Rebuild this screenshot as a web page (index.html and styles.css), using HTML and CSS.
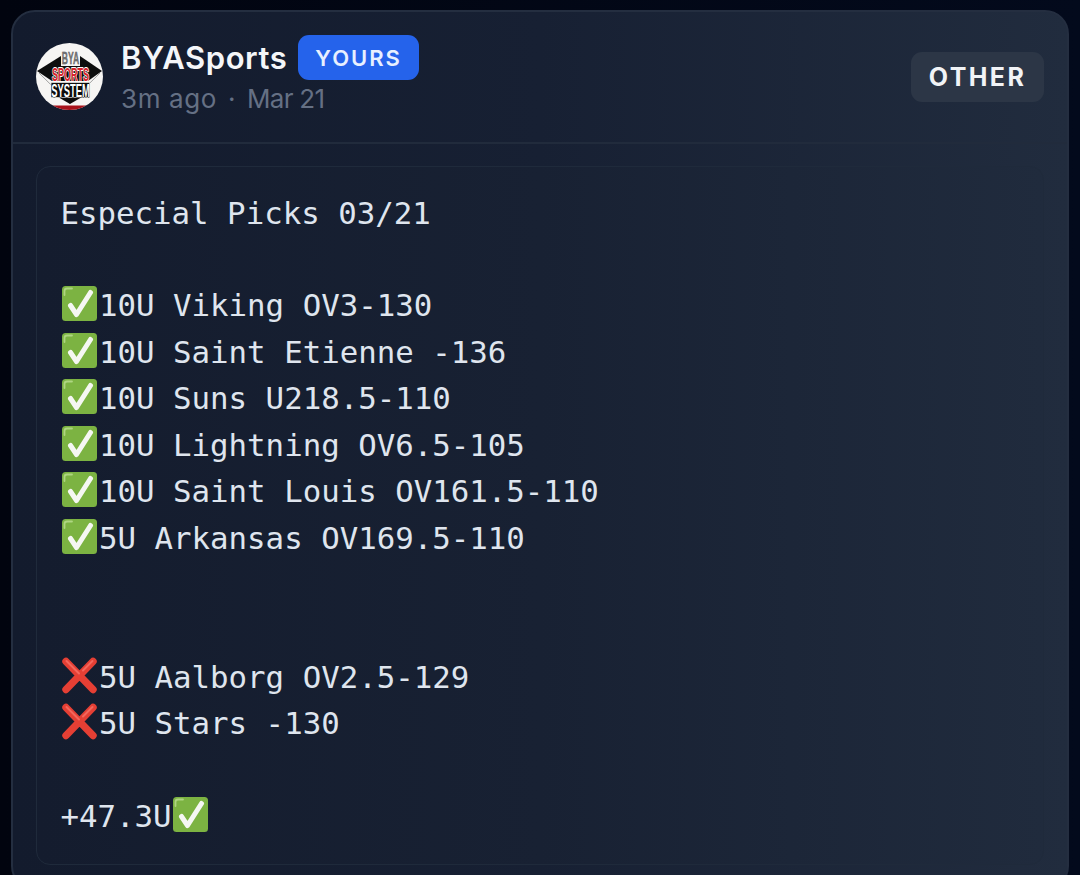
FILE: index.html
```html
<!DOCTYPE html>
<html lang="en">
<head>
<meta charset="utf-8">
<title>BYASports</title>
<link rel="stylesheet" href="styles.css">
</head>
<body>
<svg class="defs" width="0" height="0" aria-hidden="true">
  <symbol id="check" viewBox="0 0 37 37">
    <rect x="1" y="1" width="35" height="35" rx="3.5" fill="#7cb342"/>
    <path d="M3.5 10V6Q3.5 3.5 6 3.5H11" fill="none" stroke="#aed581" stroke-width="1.8" stroke-linecap="round"/>
    <path d="M9.5 20.5L15.5 29.5L29.5 7.5" fill="none" stroke="#f5f7f2" stroke-width="5" stroke-linecap="round" stroke-linejoin="round"/>
  </symbol>
  <symbol id="cross" viewBox="0 0 37 37">
    <path d="M5 4.5L32 32.5M32 4.5L5 32.5" stroke="#e53f34" stroke-width="7.4" stroke-linecap="round"/>
    <path d="M5.5 4L18 16.5M31.5 4L22 13.5" stroke="#f4675c" stroke-width="2" stroke-linecap="round"/>
  </symbol>
</svg>
<main class="card">
  <header class="card-head">
    <div class="author">
      <svg class="avatar" viewBox="0 0 67 67" role="img" aria-label="BYA Sports System">
        <defs><clipPath id="round"><circle cx="33.5" cy="33.5" r="33.5"/></clipPath></defs>
        <g clip-path="url(#round)">
          <rect width="67" height="67" fill="#f6f5f3"/>
          <path d="M1 28L25 13H44L66 28L52 38H16Z" fill="#0d0d0d"/>
          <path d="M3 30L33.5 60L64 30" fill="none" stroke="#8a8a8a" stroke-width=".8"/>
          <path d="M22 54H46L34 61Z" fill="#0d0d0d"/>
          <rect x="17" y="62.5" width="33" height="4.5" fill="#a8121a"/>
        </g>
        <rect class="logo-plate" x="25" y="8" width="19" height="15"/>
        <rect class="logo-panel" x="15" y="39.5" width="38.5" height="15" rx="1"/>
        <text class="logo-a" transform="translate(34.5 21) scale(1 1.9)">BYA</text>
        <text class="logo-b" transform="translate(34.5 38) scale(1 2.05)">SPORTS</text>
        <text class="logo-c" transform="translate(34.5 53.5) scale(1 2)">SYSTEM</text>
      </svg>
      <div class="author-text">
        <div class="name-row">
          <span class="name">BYASports</span>
          <span class="badge-yours">YOURS</span>
        </div>
        <div class="meta"><span>3m ago</span><span class="dot">·</span><span class="date">Mar 21</span></div>
      </div>
    </div>
    <span class="badge-other">OTHER</span>
  </header>
  <section class="card-body">
    <div class="post">
<p class="line">Especial Picks 03/21</p>
<p class="line">&nbsp;</p>
<p class="line"><svg class="emoji"><use href="#check"/></svg>10U Viking OV3-130</p>
<p class="line"><svg class="emoji"><use href="#check"/></svg>10U Saint Etienne -136</p>
<p class="line"><svg class="emoji"><use href="#check"/></svg>10U Suns U218.5-110</p>
<p class="line"><svg class="emoji"><use href="#check"/></svg>10U Lightning OV6.5-105</p>
<p class="line"><svg class="emoji"><use href="#check"/></svg>10U Saint Louis OV161.5-110</p>
<p class="line"><svg class="emoji"><use href="#check"/></svg>5U Arkansas OV169.5-110</p>
<p class="line">&nbsp;</p>
<p class="line">&nbsp;</p>
<p class="line"><svg class="emoji"><use href="#cross"/></svg>5U Aalborg OV2.5-129</p>
<p class="line"><svg class="emoji"><use href="#cross"/></svg>5U Stars -130</p>
<p class="line">&nbsp;</p>
<p class="line">+47.3U<svg class="emoji"><use href="#check"/></svg></p>
    </div>
  </section>
</main>
</body>
</html>
```

FILE: styles.css
```css
* { box-sizing: border-box; }
html, body { margin: 0; height: 875px; overflow: hidden; }
body {
  background: linear-gradient(90deg, #01040f 0%, #030a1c 100%);
  padding: 10px 11px 0;
  font-family: "Inter", "Liberation Sans", sans-serif;
}
.defs { position: absolute; }
.card {
  height: 880px;
  border: 2px solid #242e40;
  border-radius: 24px;
  background: linear-gradient(90deg, #131b2d 0%, #172033 50%, #212c3e 100%);
}
.card-head {
  height: 132px;
  padding: 0 23px;
  display: flex;
  align-items: center;
  justify-content: space-between;
  border-bottom: 2px solid #212b3c;
}
.author { display: flex; align-items: center; gap: 18px; }
.avatar { width: 67px; height: 67px; flex: none; margin-bottom: 2px; }
.logo-a, .logo-b, .logo-c {
  text-anchor: middle;
  font-family: "Liberation Sans", sans-serif;
  font-weight: 700;
  paint-order: stroke;
  stroke-linejoin: round;
}
.logo-plate { fill: #f6f5f3; }
.logo-panel { fill: #0d0d0d; stroke: #eee; stroke-width: .7; }
.logo-a { font-size: 8.6px; fill: #6f6f6f; stroke: #333; stroke-width: .2; }
.logo-b { font-size: 9px; fill: #d8232a; stroke: #fff; stroke-width: .9; }
.logo-c { font-size: 9.4px; fill: #fff; stroke: #111; stroke-width: .4; }
.author-text { display: flex; flex-direction: column; }
.name-row { display: flex; align-items: center; gap: 11px; height: 45px; margin-top: -1px; }
.name { font-size: 31px; font-weight: 600; letter-spacing: .55px; color: #f4f6f9; }
.badge-yours {
  height: 45px;
  padding: 0 17px;
  display: flex;
  align-items: center;
  background: #2563eb;
  border-radius: 11px;
  color: #e8f0ff;
  font-size: 22px;
  font-weight: 600;
  letter-spacing: 2px;
}
.meta {
  display: flex;
  gap: 11px;
  font-size: 26px;
  letter-spacing: .6px;
  line-height: 38px;
  color: #657084;
}
.date { letter-spacing: -.7px; }
.badge-other {
  width: 133px;
  height: 50px;
  display: flex;
  align-items: center;
  justify-content: center;
  background: #2c3646;
  border-radius: 11px;
  color: #f1f3f6;
  font-size: 25px;
  font-weight: 700;
  letter-spacing: 2.4px;
}
.card-body { padding: 22px 23px 0; }
.post {
  height: 699px;
  padding: 22.5px 23.5px;
  border: 1px solid #1f2a3b;
  border-radius: 14px;
  background: linear-gradient(90deg, #141c2e 0%, #182133 50%, #202b3d 100%);
  font-family: "DejaVu Sans Mono", monospace;
  font-size: 30.75px;
  color: #dfe5ee;
}
.line { margin: 0; height: 46.45px; line-height: 46.45px; white-space: pre; }
.emoji { width: 37px; height: 37px; margin-left: .5px; margin-right: 1px; vertical-align: -6px; }
```
